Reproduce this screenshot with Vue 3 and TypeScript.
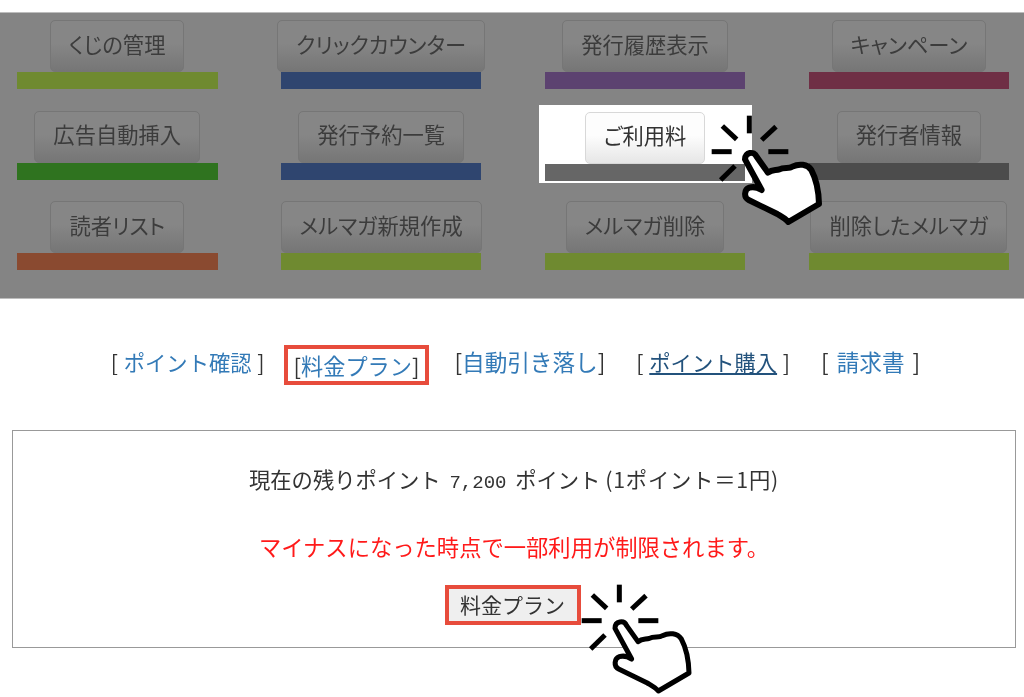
<script setup lang="ts">
interface Tile { label: string; color: string; active?: boolean }
const tiles: Tile[] = [
  { label: 'くじの管理', color: '#6f8a30' },
  { label: 'クリックカウンター', color: '#2f456f' },
  { label: '発行履歴表示', color: '#5c4270' },
  { label: 'キャンペーン', color: '#6f2f45' },
  { label: '広告自動挿入', color: '#2f731f' },
  { label: '発行予約一覧', color: '#2f456f' },
  { label: 'ご利用料', color: '#666666', active: true },
  { label: '発行者情報', color: '#4c4c4c' },
  { label: '読者リスト', color: '#8a4a30' },
  { label: 'メルマガ新規作成', color: '#6f8a30' },
  { label: 'メルマガ削除', color: '#6f8a30' },
  { label: '削除したメルマガ', color: '#6f8a30' },
]
const rays = [
  'M178 47V100', 'M97 78L140 118', 'M258 80L215 120',
  'M65 155H125', 'M235 155H295', 'M135 198L92 240',
]
const handPath = 'M165 178C165 156 192 152 200 170L234 218C247 208 257 212 268 208C282 200 297 208 307 200C327 190 352 192 364 210C380 240 386 270 387 312L295 366C285 354 272 348 262 342L176 300C160 292 163 268 178 263C195 258 205 264 215 270Z'
</script>

<template>
  <div class="page">
    <section class="panel">
      <div class="grid">
        <div v-for="t in tiles" :key="t.label" class="tile" :class="{ active: t.active }">
          <button class="tile-btn" type="button">{{ t.label }}</button>
          <div class="bar" :style="{ background: t.color }"></div>
        </div>
      </div>
    </section>

    <nav class="links">
      <span class="item">[ <a>ポイント確認</a> ]</span>
      <span class="item boxed">[<a>料金プラン</a>]</span>
      <span class="item wide">[<a>自動引き落し</a>]</span>
      <span class="item fourth">[ <a class="hover">ポイント購入</a> ]</span>
      <span class="item last">[ <a>請求書</a> ]</span>
    </nav>

    <section class="box">
      <p class="points">現在の残りポイント <span class="num">7,200</span> ポイント <span class="tail">(1ポイント＝1円)</span></p>
      <p class="warn">マイナスになった時点で一部利用が制限されます。</p>
      <button class="plan" type="button">料金プラン</button>
    </section>

    <svg class="hand hand-top" viewBox="0 0 450 405" width="150" height="135" aria-hidden="true">
      <path v-for="r in rays" :key="r" :d="r" class="ray" />
      <path :d="handPath" class="palm" />
    </svg>
    <svg class="hand hand-bottom" viewBox="0 0 450 405" width="150" height="135" aria-hidden="true">
      <path v-for="r in rays" :key="r" :d="r" class="ray" />
      <path :d="handPath" class="palm thin" />
    </svg>
  </div>
</template>

<style>
html, body { margin: 0; background: #fff; }
</style>

<style scoped>
.page {
  position: relative;
  width: 1024px;
  height: 697px;
  overflow: hidden;
  padding-top: 12px;
  box-sizing: border-box;
  background: #fff;
  font-family: "Noto Sans CJK JP", "Liberation Sans", sans-serif;
  color: #333;
  filter: blur(0.45px);
}
.panel {
  height: 287px;
  box-sizing: border-box;
  padding: 7px 15px 0 17px;
  background: #848484;
  border-top: 1px solid #bdbdbd;
  border-bottom: 1px solid #bdbdbd;
}
.grid {
  display: grid;
  grid-template-columns: repeat(4, 200.5px);
  grid-auto-rows: 69px;
  column-gap: 63.4px;
  row-gap: 21.5px;
}
.tile {
  position: relative;
  display: flex;
  flex-direction: column;
  align-items: center;
}
.tile-btn {
  flex: none;
  height: 52px;
  padding: 0 18px 6px;
  box-sizing: border-box;
  border: 1px solid #767676;
  border-radius: 5px;
  background: linear-gradient(#868686 0 45%, #767676);
  color: #3c3c3c;
  font: inherit;
  font-size: 21.3px;
  font-feature-settings: "palt";
  white-space: nowrap;
}
.bar {
  flex: none;
  width: 100%;
  height: 17px;
}
.tile.active { padding-top: 1px; }
.tile.active::before {
  content: "";
  position: absolute;
  inset: -6px -7px -3px -6px;
  background: #fff;
}
.tile.active .tile-btn {
  position: relative;
  background: linear-gradient(#fdfdfd 0 45%, #e6e6e6);
  border-color: #d8d8d8;
  color: #333;
}
.tile.active .bar { position: relative; }
.links {
  display: flex;
  align-items: center;
  justify-content: center;
  gap: 29px;
  height: 40px;
  margin-top: 46px;
  padding-left: 7px;
  font-size: 21.3px;
  line-height: 30px;
  white-space: nowrap;
}
.item { padding-bottom: 6px; word-spacing: 1px; }
.item a { color: #337ab7; }
.item a.hover { color: #23527c; text-decoration: underline; }
.wide { font-size: 22.6px; margin-right: 2px; }
.fourth { margin-right: 2px; }
.last { font-size: 22.6px; word-spacing: 3px; }
.boxed {
  display: flex;
  align-items: center;
  height: 40px;
  margin: 0 -4px 0 -10px;
  padding: 0 6px 0;
  box-sizing: border-box;
  border: 4px solid #e74c3c;
  font-size: 22.2px;
}
.box {
  display: flex;
  flex-direction: column;
  align-items: center;
  box-sizing: border-box;
  width: 1004px;
  height: 218px;
  margin: 45px 0 0 12px;
  padding-top: 30px;
  border: 1px solid #999;
  text-align: center;
}
.box p { margin: 0; line-height: 36px; }
.points { font-size: 21.3px; }
.num { font-family: "Liberation Mono", monospace; font-size: 19px; margin: 0 4px; }
.tail { letter-spacing: 0.8px; }
.warn { margin-top: 27px !important; font-size: 22.3px; color: #ff1a1a; }
.plan {
  margin-top: 21px;
  margin-left: -3px;
  width: 136px;
  height: 40px;
  padding: 0 0 5px;
  box-sizing: border-box;
  border: 4px solid #e74c3c;
  background: #efefef;
  color: #333;
  font: inherit;
  font-size: 21px;
}
.hand { position: absolute; }
.hand-top { left: 690px; top: 100px; }
.hand-bottom { left: 560px; top: 569px; }
.ray { stroke: #000; stroke-width: 15; fill: none; }
.palm { fill: #fff; stroke: #000; stroke-width: 18; stroke-linejoin: round; }
.palm.thin { stroke-width: 15; }
</style>
